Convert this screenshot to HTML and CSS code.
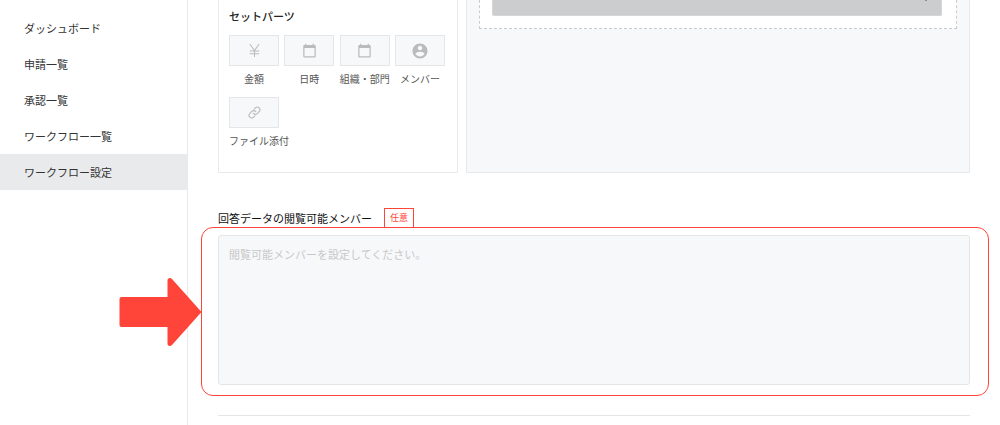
FILE: index.html
```html
<!DOCTYPE html>
<html lang="ja">
<head>
<meta charset="utf-8">
<meta name="viewport" content="width=device-width, initial-scale=1">
<title>ワークフロー設定</title>
<link rel="stylesheet" href="styles.css">
</head>
<body>
<div class="app">
  <nav class="sidebar">
    <a class="nav-link" href="#">ダッシュボード</a>
    <a class="nav-link" href="#">申請一覧</a>
    <a class="nav-link" href="#">承認一覧</a>
    <a class="nav-link" href="#">ワークフロー一覧</a>
    <a class="nav-link active" href="#" aria-current="page">ワークフロー設定</a>
  </nav>
  <main class="main">
    <div class="editor">
      <section class="parts">
        <h2 class="parts-title">セットパーツ</h2>
        <div class="parts-grid">
          <button class="part" type="button">
            <span class="tile"><svg class="icon" viewBox="0 0 16 16" fill="none" stroke="currentColor" stroke-width="1.1"><path d="M3 1 8 8l5-7M8 8v7M3 8.500h10M3 11.500h10"/></svg></span>
            <span class="part-name">金額</span>
          </button>
          <button class="part" type="button">
            <span class="tile"><svg class="icon" viewBox="0 0 24 24" fill="currentColor"><path d="M20 3h-1V1h-2v2H7V1H5v2H4c-1.100 0-2 .9-2 2v16c0 1.100.9 2 2 2h16c1.100 0 2-.9 2-2V5c0-1.100-.9-2-2-2zm0 18H4V8h16v13z"/></svg></span>
            <span class="part-name">日時</span>
          </button>
          <button class="part" type="button">
            <span class="tile"><svg class="icon" viewBox="0 0 24 24" fill="currentColor"><path d="M20 3h-1V1h-2v2H7V1H5v2H4c-1.100 0-2 .9-2 2v16c0 1.100.9 2 2 2h16c1.100 0 2-.9 2-2V5c0-1.100-.9-2-2-2zm0 18H4V8h16v13z"/></svg></span>
            <span class="part-name">組織・部門</span>
          </button>
          <button class="part" type="button">
            <span class="tile"><svg class="icon icon-large" viewBox="0 0 24 24" fill="currentColor"><path d="M12 2C6.480 2 2 6.480 2 12s4.480 10 10 10 10-4.480 10-10S17.520 2 12 2zm0 3c1.660 0 3 1.340 3 3s-1.340 3-3 3-3-1.340-3-3 1.340-3 3-3zm0 14.200c-2.500 0-4.710-1.280-6-3.220.03-1.990 4-3.080 6-3.080 1.990 0 5.970 1.090 6 3.080-1.290 1.940-3.500 3.220-6 3.220z"/></svg></span>
            <span class="part-name">メンバー</span>
          </button>
          <button class="part" type="button">
            <span class="tile"><svg class="icon" viewBox="0 0 24 24" fill="none" stroke="currentColor" stroke-width="1.800" stroke-linecap="round" stroke-linejoin="round"><path d="M10 13.500a4.300 4.300 0 0 0 6.300.2l3.100-3.100a4.300 4.300 0 0 0-6.100-6.100l-2 2"/><path d="M14 10.500a4.300 4.300 0 0 0-6.300-.2l-3.100 3.100a4.300 4.300 0 0 0 6.100 6.100l2-2"/></svg></span>
            <span class="part-name">ファイル添付</span>
          </button>
        </div>
      </section>
      <section class="canvas">
        <div class="drop-zone">
          <div class="select-wrap">
            <select class="select" aria-label="選択項目"><option></option></select>
            <svg class="caret" viewBox="0 0 8 5" fill="currentColor"><path d="M0 0h8L4 5z"/></svg>
          </div>
        </div>
      </section>
    </div>
    <section class="field">
      <div class="field-head">
        <label class="field-label" for="viewers">回答データの閲覧可能メンバー</label>
        <span class="badge">任意</span>
      </div>
      <div class="field-body">
        <textarea class="textarea" id="viewers" placeholder="閲覧可能メンバーを設定してください。"></textarea>
        <div class="highlight">
          <svg class="pointer" viewBox="0 0 82 68" fill="currentColor"><path d="M2 19H48V2.500Q48 0 50.500 0Q51.500 0 52.500 1L82 34L52.500 67Q51.500 68 50.500 68Q48 68 48 65.500V49H2Q0 49 0 47V21Q0 19 2 19Z"/></svg>
        </div>
      </div>
    </section>
    <hr class="divider">
  </main>
</div>
</body>
</html>
```
FILE: styles.css
```css
* {
  box-sizing: border-box;
}

body {
  margin: 0;
  background: #fff;
  color: #222;
  font-family: "Noto Sans CJK JP", sans-serif;
  font-size: 11px;
  line-height: 16px;
}

.app {
  display: flex;
  min-height: 100vh;
}

.sidebar {
  flex: 0 0 188px;
  padding-top: 10px;
  border-right: 1px solid #e8e9eb;
}

.nav-link {
  display: block;
  padding: 10px 24px;
  color: #333;
  text-decoration: none;
}

.nav-link.active {
  background: #e9eaec;
}

.main {
  flex: 1;
  min-width: 0;
  padding: 0 30px 8px;
}

.editor {
  display: flex;
  gap: 8px;
}

.parts {
  flex: 0 0 240px;
  padding: 8px 12px 23px 10px;
  border: 1px solid #e8e9eb;
  border-top: 0;
}

.parts-title {
  margin: 0 0 11px;
  font-size: 11px;
  font-weight: 500;
}

.parts-grid {
  display: grid;
  grid-template-columns: repeat(4, 50px);
  justify-content: space-between;
  row-gap: 10px;
}

.part {
  min-width: 0;
  padding: 0;
  border: 0;
  background: none;
  color: #555;
  font-family: inherit;
  font-size: 10px;
  line-height: 16px;
}

.tile {
  display: flex;
  align-items: center;
  justify-content: center;
  height: 31px;
  margin-bottom: 5px;
  border: 1px solid #e4e6e8;
  background: #f7f8fa;
  color: #bbb;
}

.icon {
  width: 15px;
  height: 15px;
}

.icon-large {
  width: 18px;
  height: 18px;
}

.part-name {
  display: block;
  white-space: nowrap;
}

.canvas {
  flex: 1;
  min-width: 0;
  padding: 0 12px;
  border: 1px solid #e8e9eb;
  border-top: 0;
  background: #f7f8fa;
}

.drop-zone {
  padding: 0 14px 12px 12px;
  border: 1px dashed #c9cbcd;
  border-top: 0;
  background: #fff;
}

.select-wrap {
  position: relative;
  height: 16px;
}

.select {
  display: block;
  width: 100%;
  height: 100%;
  appearance: none;
  border: 1px solid #d5d6d8;
  border-top: 0;
  border-radius: 0 0 2px 2px;
  background: #cccdcf;
}

.caret {
  position: absolute;
  top: -4px;
  right: 12px;
  width: 8px;
  height: 5px;
  color: #333;
}

.field {
  padding-top: 35px;
}

.field-head {
  display: flex;
  align-items: center;
  gap: 12px;
  margin-bottom: 7px;
}

.field-label {
  color: #111;
  font-size: 11px;
}

.badge {
  padding: 1px 5px;
  border: 1px solid #ff453a;
  color: #ff453a;
  font-size: 9px;
}

.field-body {
  position: relative;
}

.textarea {
  display: block;
  width: 100%;
  height: 150px;
  padding: 10px;
  border: 1px solid #e4e6e8;
  border-radius: 3px;
  background: #f7f8fa;
  font-family: inherit;
  font-size: 11px;
  line-height: 16px;
  resize: none;
}

.textarea::placeholder {
  color: #c8c8c8;
}

.highlight {
  position: absolute;
  inset: -8px -19px -11px -17px;
  border: 1px solid #ff453a;
  border-radius: 12px;
  pointer-events: none;
}

.pointer {
  position: absolute;
  top: 50px;
  right: 100%;
  width: 83px;
  height: 68px;
  color: #ff453a;
}

.divider {
  margin: 30px 0 0;
  border: 0;
  border-top: 1px solid #e4e6e8;
}
```
